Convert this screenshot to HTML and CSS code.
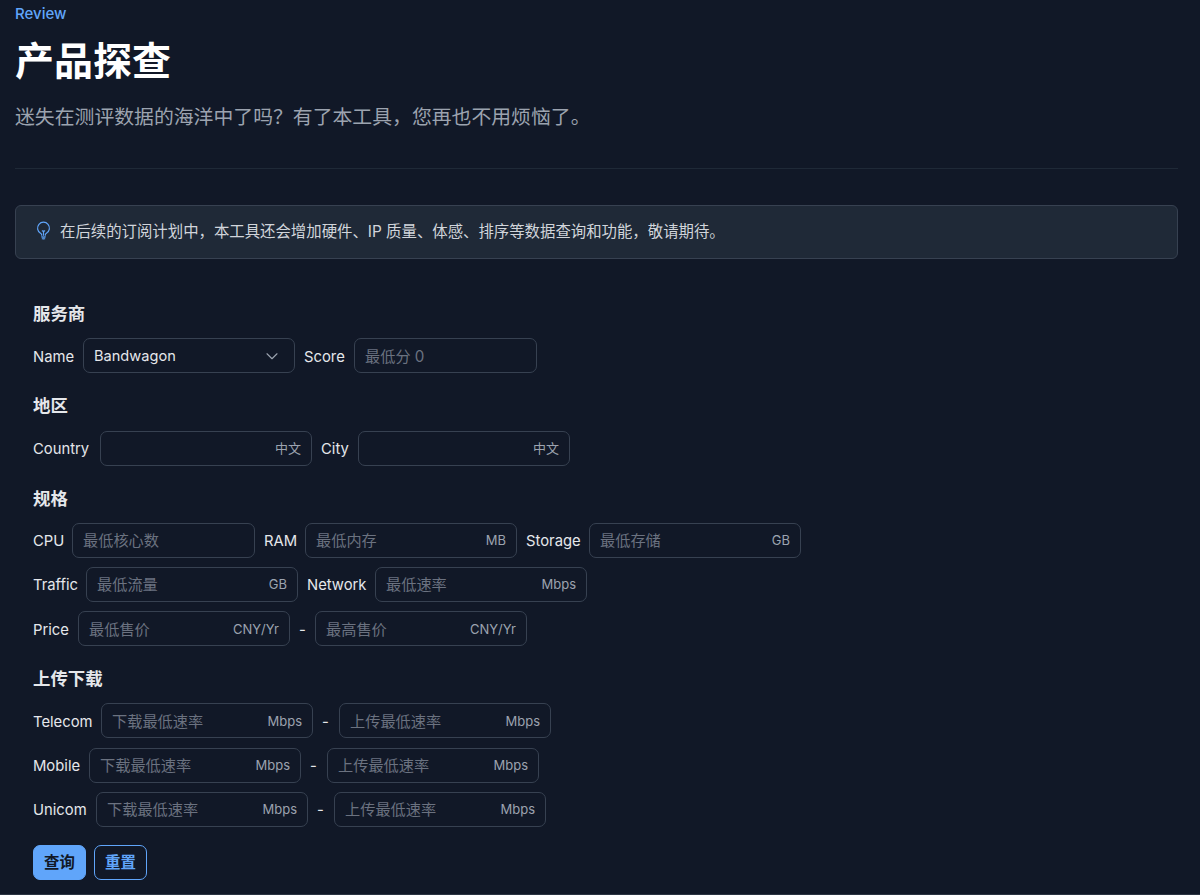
FILE: index.html
```html
<!DOCTYPE html>
<html lang="zh">
<head>
<meta charset="utf-8">
<title>产品探查</title>
<link rel="stylesheet" href="styles.css">
</head>
<body>
<main class="page">
  <header class="head">
    <p class="eyebrow">Review</p>
    <h1 class="title">产品探查</h1>
    <p class="lead">迷失在测评数据的海洋中了吗？有了本工具，您再也不用烦恼了。</p>
  </header>
  <div class="alert">
    <svg class="bulb" viewBox="0 0 24 24" fill="none" stroke="currentColor" stroke-width="1.5" stroke-linecap="round" stroke-linejoin="round"><path d="M12 18v-5.25m0 0a6.01 6.01 0 0 0 1.5-.19m-1.5.19a6.01 6.01 0 0 1-1.5-.19m3.75 7.48a12.06 12.06 0 0 1-4.5 0m3.75 2.38a14.4 14.4 0 0 1-3 0M14.25 18v-.19c0-.98.66-1.82 1.5-2.32a7.5 7.5 0 1 0-7.52 0c.85.5 1.52 1.34 1.52 2.32V18"/></svg>
    <span>在后续的订阅计划中，本工具还会增加硬件、IP 质量、体感、排序等数据查询和功能，敬请期待。</span>
  </div>
  <form class="form">
    <h2 class="group">服务商</h2>
    <div class="row">
      <label class="lab w41">Name</label>
      <div class="field select"><span class="value">Bandwagon</span><svg class="chev" viewBox="0 0 12 12" fill="none" stroke="currentColor" stroke-width="1.1" stroke-linecap="round" stroke-linejoin="round"><path d="M1 3.75l5 5 5-5"/></svg></div>
      <label class="lab w41">Score</label>
      <div class="field narrow"><span class="ph">最低分 0</span></div>
    </div>
    <h2 class="group">地区</h2>
    <div class="row">
      <label class="lab w58">Country</label>
      <div class="field end"><span class="unit">中文</span></div>
      <label class="lab w28">City</label>
      <div class="field end"><span class="unit">中文</span></div>
    </div>
    <h2 class="group">规格</h2>
    <div class="row">
      <label class="lab w30">CPU</label>
      <div class="field narrow"><span class="ph">最低核心数</span></div>
      <label class="lab w32">RAM</label>
      <div class="field"><span class="ph">最低内存</span><span class="unit">MB</span></div>
      <label class="lab w54">Storage</label>
      <div class="field"><span class="ph">最低存储</span><span class="unit">GB</span></div>
    </div>
    <div class="row">
      <label class="lab w44">Traffic</label>
      <div class="field"><span class="ph">最低流量</span><span class="unit">GB</span></div>
      <label class="lab w59">Network</label>
      <div class="field"><span class="ph">最低速率</span><span class="unit">Mbps</span></div>
    </div>
    <div class="row">
      <label class="lab w36">Price</label>
      <div class="field"><span class="ph">最低售价</span><span class="unit">CNY/Yr</span></div>
      <span class="lab w7">-</span>
      <div class="field"><span class="ph">最高售价</span><span class="unit">CNY/Yr</span></div>
    </div>
    <h2 class="group">上传下载</h2>
    <div class="row">
      <label class="lab w59">Telecom</label>
      <div class="field"><span class="ph">下载最低速率</span><span class="unit">Mbps</span></div>
      <span class="lab w8">-</span>
      <div class="field"><span class="ph">上传最低速率</span><span class="unit">Mbps</span></div>
    </div>
    <div class="row">
      <label class="lab w47">Mobile</label>
      <div class="field"><span class="ph">下载最低速率</span><span class="unit">Mbps</span></div>
      <span class="lab w8">-</span>
      <div class="field"><span class="ph">上传最低速率</span><span class="unit">Mbps</span></div>
    </div>
    <div class="row">
      <label class="lab w54">Unicom</label>
      <div class="field"><span class="ph">下载最低速率</span><span class="unit">Mbps</span></div>
      <span class="lab w8">-</span>
      <div class="field"><span class="ph">上传最低速率</span><span class="unit">Mbps</span></div>
    </div>
    <div class="actions">
      <button type="button" class="btn primary">查询</button>
      <button type="button" class="btn outline">重置</button>
    </div>
  </form>
</main>
</body>
</html>
```
FILE: styles.css
```css
* { box-sizing: border-box; }
html, body { margin: 0; height: 895px; overflow: hidden; }
body {
  background: #111827;
  color: #e5e7eb;
  font-family: Inter, "Noto Sans CJK SC", sans-serif;
  font-size: 15px;
  border-bottom: 1px solid #2b3442;
}
.page { padding: 0 22px 0 15px; }
.head { height: 169px; border-bottom: 1px solid #1f2937; }
.eyebrow { margin: 0; padding-top: 5px; height: 22px; line-height: 18px; font-size: 15px; font-weight: 500; color: #60a5fa; }
.title { margin: 15px 0 0; font-size: 39px; line-height: 48px; font-weight: 700; color: #fff; }
.lead { margin: 18px 0 0; font-size: 19.85px; line-height: 28px; color: #9ca3af; }
.alert {
  margin-top: 36px;
  height: 54px;
  display: flex;
  align-items: center;
  gap: 7px;
  padding: 0 18px 4px;
  background: #1f2937;
  border: 1px solid #374151;
  border-radius: 6px;
  font-size: 15.4px;
  color: #d1d5db;
}
.bulb { width: 19px; height: 19px; color: #60a5fa; flex: none; }
.form { padding: 0 18px; }
.group { margin: 0 0 11.15px; height: 26px; font-size: 17.4px; line-height: 26px; font-weight: 700; color: #e5e7eb; }
.group:first-child { margin-top: 42.25px; }
.row { display: flex; align-items: center; gap: 9px; height: 35px; margin-bottom: 9.25px; }
.row + .group { margin-top: 20px; }
.lab { font-size: 14.8px; color: #e5e7eb; white-space: nowrap; flex: none; padding-top: 2px; }
.w7 { width: 7px; }
.w8 { width: 8px; }
.w28 { width: 28px; }
.w30 { width: 30px; }
.w32 { width: 32px; }
.w36 { width: 36px; }
.w41 { width: 41px; }
.w44 { width: 44px; }
.w47 { width: 47px; }
.w54 { width: 54px; }
.w58 { width: 58px; }
.w59 { width: 59px; }
.field {
  width: 212px;
  height: 35px;
  flex: none;
  display: flex;
  align-items: center;
  justify-content: space-between;
  padding: 0 10px 2px;
  border: 1px solid #374151;
  border-radius: 7px;
}
.narrow { width: 183px; }
.select { padding: 0 16px 0 10px; }
.end { justify-content: flex-end; padding-bottom: 4px; }
.ph { color: #6b7280; font-size: 15.2px; }
.unit { color: #9ca3af; font-size: 13px; padding-top: 2px; }
.value { color: #e5e7eb; font-size: 14.6px; }
.chev { width: 12px; height: 12px; color: #9ca3af; }
.actions { display: flex; gap: 8px; margin-top: 18.2px; }
.btn {
  width: 53px;
  height: 35px;
  padding: 0 0 3px;
  border-radius: 7px;
  font-family: inherit;
  font-size: 15.4px;
  font-weight: 700;
}
.primary { background: #60a5fa; border: 1px solid #60a5fa; color: #111827; }
.outline { background: transparent; border: 1px solid #60a5fa; color: #60a5fa; }
```
